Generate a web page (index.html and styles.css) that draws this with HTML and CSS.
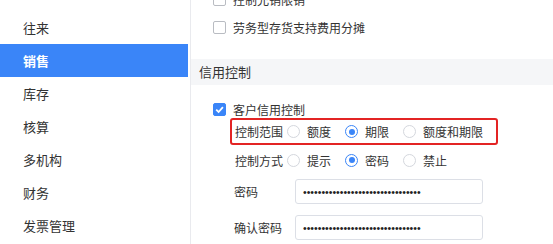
FILE: index.html
```html
<!DOCTYPE html>
<html lang="zh">
<head>
<meta charset="utf-8">
<link rel="stylesheet" href="styles.css">
</head>
<body>
<div class="page">
  <nav class="sidebar">
    <div class="nav-item">往来</div>
    <div class="nav-item active">销售</div>
    <div class="nav-item">库存</div>
    <div class="nav-item">核算</div>
    <div class="nav-item">多机构</div>
    <div class="nav-item">财务</div>
    <div class="nav-item">发票管理</div>
  </nav>
  <main class="content">
    <div class="opt-row first"><span class="checkbox"></span><span>控制允销限销</span></div>
    <div class="opt-row"><span class="checkbox"></span><span>劳务型存货支持费用分摊</span></div>
    <div class="section-head">信用控制</div>
    <div class="opt-row credit"><span class="checkbox checked"><svg viewBox="0 0 13 13" width="13" height="13"><path d="M3.2 6.6 L5.6 9 L9.9 4.2" fill="none" stroke="#fff" stroke-width="1.8"/></svg></span><span>客户信用控制</span></div>
    <div class="radio-row highlight">
      <span class="field-label">控制范围</span>
      <span class="radio"></span><span class="radio-text">额度</span>
      <span class="radio checked"></span><span class="radio-text">期限</span>
      <span class="radio"></span><span class="radio-text">额度和期限</span>
    </div>
    <div class="radio-row plain">
      <span class="field-label">控制方式</span>
      <span class="radio"></span><span class="radio-text">提示</span>
      <span class="radio checked"></span><span class="radio-text">密码</span>
      <span class="radio"></span><span class="radio-text">禁止</span>
    </div>
    <div class="input-row pw1">
      <span class="input-label">密码</span>
      <input class="pw" type="password" value="abcdefghijabcdefghijabcdefghij12">
    </div>
    <div class="input-row pw2">
      <span class="input-label">确认密码</span>
      <input class="pw" type="password" value="abcdefghijabcdefghijabcdefghij12">
    </div>
  </main>
</div>
</body>
</html>
```

FILE: styles.css
```css
html, body {
  margin: 0;
  padding: 0;
  background: #fff;
  overflow: hidden;
}
body {
  font-family: "Noto Sans CJK SC", "Noto Sans", sans-serif;
  color: #333;
  font-size: 12px;
}
.page {
  display: flex;
  width: 553px;
  height: 244px;
  overflow: hidden;
}
.sidebar {
  width: 188px;
  flex: none;
  padding-top: 11px;
  padding-right: 2px;
  border-right: 1px solid #e9eaee;
}
.nav-item {
  height: 33px;
  line-height: 33px;
  padding-left: 23px;
  font-size: 13px;
  color: #333;
}
.nav-item.active {
  background: #3a85f8;
  color: #fff;
  font-weight: bold;
}
.content {
  flex: 1;
  display: flex;
  flex-direction: column;
  min-width: 0;
}
.opt-row {
  height: 28px;
  display: flex;
  align-items: center;
  padding-left: 22px;
  gap: 7px;
  flex: none;
}
.opt-row.first {
  margin-top: -15px;
}
.checkbox {
  width: 13px;
  height: 13px;
  box-sizing: border-box;
  border: 1px solid #b9bcc2;
  border-radius: 2px;
  background: #fff;
  flex: none;
  display: flex;
}
.checkbox.checked {
  background: #3a85f8;
  border-color: #3a85f8;
}
.checkbox.checked svg {
  margin: -1px;
}
.section-head {
  margin-top: 18px;
  height: 26px;
  line-height: 26px;
  padding-left: 8px;
  background: #f5f6f8;
  font-size: 13px;
  color: #333;
  flex: none;
}
.opt-row.credit {
  margin-top: 15px;
  height: 18px;
}
.radio-row {
  display: flex;
  align-items: center;
  flex: none;
}
.radio-row.highlight {
  margin-top: 0;
  margin-left: 39px;
  width: 268px;
  height: 27px;
  box-sizing: border-box;
  border: 2px solid #e32424;
  border-radius: 3px;
  padding-left: 3px;
}
.radio-row.plain {
  margin-top: 1px;
  height: 28px;
  padding-left: 44px;
}
.field-label {
  width: 52px;
  flex: none;
}
.radio {
  width: 13px;
  height: 13px;
  box-sizing: border-box;
  border: 1px solid #d4d7dd;
  border-radius: 50%;
  flex: none;
  margin-right: 7px;
  position: relative;
}
.radio.checked {
  border-color: #3a85f8;
}
.radio.checked::after {
  content: "";
  position: absolute;
  left: 2.5px;
  top: 2.5px;
  width: 6px;
  height: 6px;
  border-radius: 50%;
  background: #3a85f8;
}
.radio-text {
  margin-right: 14px;
  flex: none;
}
.input-row {
  display: flex;
  align-items: center;
  padding-left: 43px;
  flex: none;
}
.input-row.pw1 {
  margin-top: 5px;
}
.input-row.pw2 {
  margin-top: 11px;
}
.input-label {
  width: 61px;
  flex: none;
}
.pw {
  width: 188px;
  height: 25px;
  box-sizing: border-box;
  border: 1px solid #dcdfe6;
  border-radius: 3px;
  padding: 0 7px;
  font-family: "Liberation Sans", sans-serif;
  font-size: 10.5px;
  letter-spacing: 0;
  color: #222;
  outline: none;
  margin: 0;
}
```
